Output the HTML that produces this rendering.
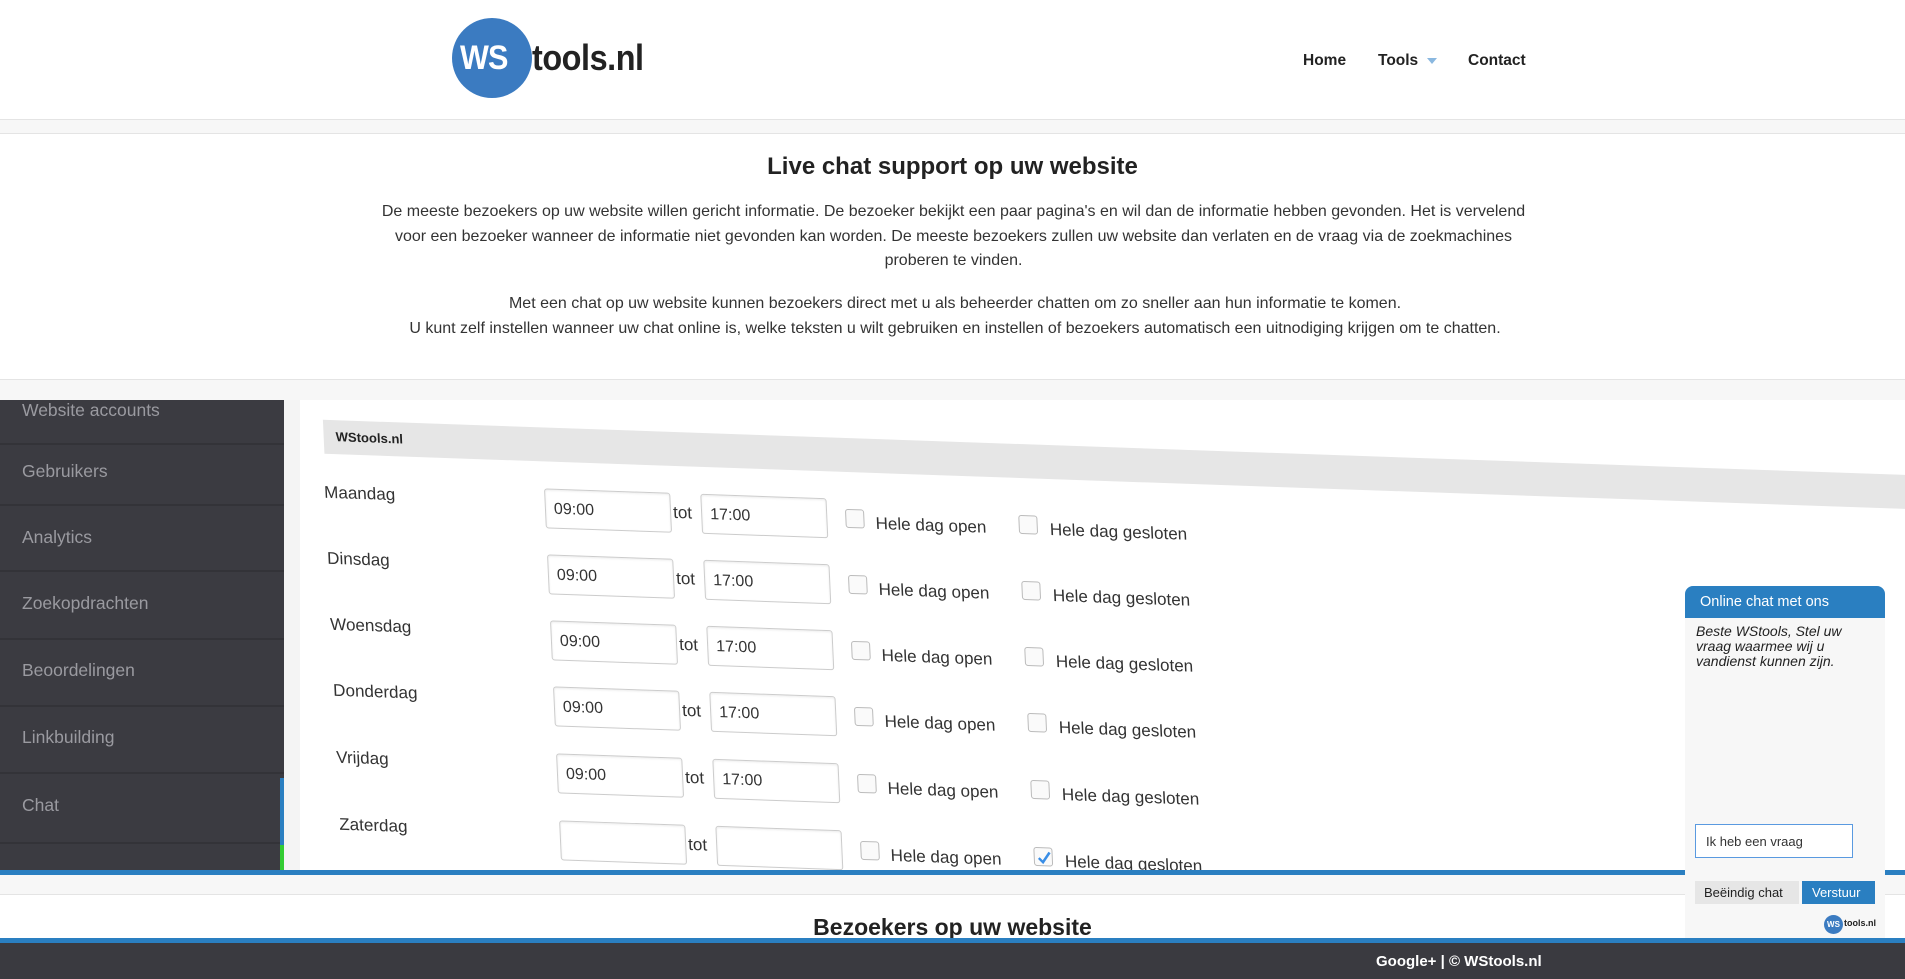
<!DOCTYPE html>
<html><head><meta charset="utf-8"><style>
*{margin:0;padding:0;box-sizing:border-box}
html,body{width:1905px;height:979px;overflow:hidden}
body{background:#fff;font-family:"Liberation Sans","DejaVu Sans",sans-serif;position:relative;color:#222}
.abs{position:absolute}
.nav{font-size:15.5px;color:#222;font-weight:bold;top:52px}
.p{left:366px;width:1175px;text-align:center;font-size:16px;line-height:24.5px;color:#333}
.side{left:0;top:400px;width:284px;height:470px;background:#3b3b41;overflow:hidden}
.si{position:absolute;left:22px;font-size:17.5px;color:#9a9aa0}
.sep{position:absolute;left:0;width:284px;height:2px;background:#333338}
.panel{left:300px;top:400px;width:1605px;height:470px;background:#fff;overflow:hidden}
.form{position:absolute;left:0;top:0;width:1700px;height:600px;transform-origin:0 0;transform:skewX(2.6deg) skewY(2deg)}
.row{position:absolute;left:0;height:42px;width:1000px;font-size:17px;color:#333}
.row .lab{position:absolute;left:20px;top:2px}
.in{position:absolute;top:0;width:126px;height:40px;border:1px solid #ccc;border-radius:3px;padding:11px 8px;font-size:16px;background:#fff;box-shadow:inset 0 1px 2px rgba(0,0,0,.08)}
.tot{position:absolute;left:368px;top:10px}
.cb{position:absolute;top:10px;width:19px;height:19px;border:1px solid #bbb;border-radius:3px;background:#fafafa}
.ct{position:absolute;top:14px}
</style></head><body>
<div class="abs" style="left:452px;top:18px;width:80px;height:80px;border-radius:50%;background:#3b7bc1"></div>
<div class="abs" style="left:460px;top:39px;font-size:34px;font-weight:bold;color:#fff;letter-spacing:-1px;transform:scaleX(.9);transform-origin:0 0">WS</div>
<div class="abs" style="left:532px;top:37px;font-size:36px;font-weight:bold;color:#222;letter-spacing:-0.5px;transform:scaleX(.9);transform-origin:0 0">tools.nl</div>
<div class="abs nav" style="left:1303px">Home</div>
<div class="abs nav" style="left:1378px">Tools</div>
<div class="abs" style="left:1427px;top:58px;width:0;height:0;border-left:5px solid transparent;border-right:5px solid transparent;border-top:6px solid #8ab8e0"></div>
<div class="abs nav" style="left:1468px">Contact</div>
<div class="abs" style="left:0;top:119px;width:1905px;height:15px;background:#f7f7f7;border-top:1px solid #e4e4e4;border-bottom:1px solid #e4e4e4"></div>
<div class="abs" style="left:0;top:153px;width:1905px;text-align:center;font-weight:bold;font-size:24px;color:#222">Live chat support op uw website</div>
<div class="abs p" style="top:200px">De meeste bezoekers op uw website willen gericht informatie. De bezoeker bekijkt een paar pagina's en wil dan de informatie hebben gevonden. Het is vervelend voor een bezoeker wanneer de informatie niet gevonden kan worden. De meeste bezoekers zullen uw website dan verlaten en de vraag via de zoekmachines proberen te vinden.</div>
<div class="abs p" style="top:292px;left:300px;width:1310px">Met een chat op uw website kunnen bezoekers direct met u als beheerder chatten om zo sneller aan hun informatie te komen.<br>U kunt zelf instellen wanneer uw chat online is, welke teksten u wilt gebruiken en instellen of bezoekers automatisch een uitnodiging krijgen om te chatten.</div>
<div class="abs" style="left:0;top:379px;width:1905px;height:21px;background:#f7f7f7;border-top:1px solid #e4e4e4"></div>
<div class="abs" style="left:284px;top:400px;width:16px;height:470px;background:#f4f4f4"></div>
<div class="abs side">
<div class="si" style="top:0px">Website accounts</div><div class="sep" style="top:43px"></div>
<div class="si" style="top:61px">Gebruikers</div><div class="sep" style="top:104px"></div>
<div class="si" style="top:127px">Analytics</div><div class="sep" style="top:170px"></div>
<div class="si" style="top:193px">Zoekopdrachten</div><div class="sep" style="top:238px"></div>
<div class="si" style="top:260px">Beoordelingen</div><div class="sep" style="top:305px"></div>
<div class="si" style="top:327px">Linkbuilding</div><div class="sep" style="top:372px"></div>
<div class="si" style="top:395px">Chat</div><div class="sep" style="top:442px"></div>
<div style="position:absolute;left:280px;top:378px;width:4px;height:67px;background:#2a7fc1"></div>
<div style="position:absolute;left:280px;top:445px;width:4px;height:30px;background:#3c3"></div>
</div>
<div class="abs panel">
<div class="form">
<div style="position:absolute;left:22px;top:19px;width:1700px;height:34px;background:#e6e6e6"></div>
<div style="position:absolute;left:34px;top:28px;font-size:13px;font-weight:bold;color:#222">WStools.nl</div>
<div class="row" style="top:80px"><span class="lab">Maandag</span><div class="in" style="left:240px">09:00</div><span class="tot">tot</span><div class="in" style="left:396px">17:00</div><div class="cb" style="left:540px"></div><span class="ct" style="left:570px">Hele dag open</span><div class="cb" style="left:713px"></div><span class="ct" style="left:744px">Hele dag gesloten</span></div>
<div class="row" style="top:146px"><span class="lab">Dinsdag</span><div class="in" style="left:240px">09:00</div><span class="tot">tot</span><div class="in" style="left:396px">17:00</div><div class="cb" style="left:540px"></div><span class="ct" style="left:570px">Hele dag open</span><div class="cb" style="left:713px"></div><span class="ct" style="left:744px">Hele dag gesloten</span></div>
<div class="row" style="top:212px"><span class="lab">Woensdag</span><div class="in" style="left:240px">09:00</div><span class="tot">tot</span><div class="in" style="left:396px">17:00</div><div class="cb" style="left:540px"></div><span class="ct" style="left:570px">Hele dag open</span><div class="cb" style="left:713px"></div><span class="ct" style="left:744px">Hele dag gesloten</span></div>
<div class="row" style="top:278px"><span class="lab">Donderdag</span><div class="in" style="left:240px">09:00</div><span class="tot">tot</span><div class="in" style="left:396px">17:00</div><div class="cb" style="left:540px"></div><span class="ct" style="left:570px">Hele dag open</span><div class="cb" style="left:713px"></div><span class="ct" style="left:744px">Hele dag gesloten</span></div>
<div class="row" style="top:345px"><span class="lab">Vrijdag</span><div class="in" style="left:240px">09:00</div><span class="tot">tot</span><div class="in" style="left:396px">17:00</div><div class="cb" style="left:540px"></div><span class="ct" style="left:570px">Hele dag open</span><div class="cb" style="left:713px"></div><span class="ct" style="left:744px">Hele dag gesloten</span></div>
<div class="row" style="top:412px"><span class="lab">Zaterdag</span><div class="in" style="left:240px"></div><span class="tot">tot</span><div class="in" style="left:396px"></div><div class="cb" style="left:540px"></div><span class="ct" style="left:570px">Hele dag open</span><div class="cb" style="left:713px"><svg width="19" height="19" viewBox="0 0 19 19"><path d="M4 10 L8 14 L15 4" stroke="#3a8ee6" stroke-width="2.5" fill="none"/></svg></div><span class="ct" style="left:744px">Hele dag gesloten</span></div>
</div></div>
<div class="abs" style="left:0;top:870px;width:1905px;height:5px;background:#2a7fc1"></div>
<div class="abs" style="left:0;top:875px;width:1905px;height:20px;background:#f7f7f7;border-bottom:1px solid #e4e4e4"></div>
<div class="abs" style="left:0;top:914px;width:1905px;text-align:center;font-weight:bold;font-size:23px;color:#222">Bezoekers op uw website</div>
<div class="abs" style="left:0;top:938px;width:1905px;height:5px;background:#2a7fc1"></div>
<div class="abs" style="left:0;top:943px;width:1905px;height:36px;background:#3a3a40"></div>
<div class="abs" style="left:1376px;top:953px;font-size:15px;font-weight:bold;color:#fff">Google+ | © WStools.nl</div>
<div class="abs" style="left:1685px;top:586px;width:200px;height:352px;background:#f7f7f7;border-radius:8px 8px 0 0;overflow:hidden">
<div style="height:32px;background:#2a7fc1;color:#fff;font-size:14.5px;padding:8px 15px">Online chat met ons</div>
<div style="padding:6px 11px;font-style:italic;font-size:14px;line-height:15px;color:#222">Beste WStools, Stel uw vraag waarmee wij u vandienst kunnen zijn.</div>
<div style="position:absolute;left:10px;top:238px;width:158px;height:34px;border:1.5px solid #5a9ae0;background:#fff;font-size:13px;padding:9px 10px;color:#333">Ik heb een vraag</div>
<div style="position:absolute;left:10px;top:295px;width:104px;height:23px;background:#e6e6e6;font-size:13px;padding:4px 9px;color:#222;white-space:nowrap">Beëindig chat</div>
<div style="position:absolute;left:117px;top:295px;width:73px;height:23px;background:#2a7fc1;font-size:13px;padding:4px 10px;color:#fff">Verstuur</div>
<div style="position:absolute;left:139px;top:329px;width:19px;height:19px;border-radius:50%;background:#3b7bc1;color:#fff;font-size:8px;font-weight:bold;text-align:center;line-height:19px">WS</div>
<div style="position:absolute;left:159px;top:332px;font-size:9px;font-weight:bold;color:#222">tools.nl</div>
</div>
</body></html>
